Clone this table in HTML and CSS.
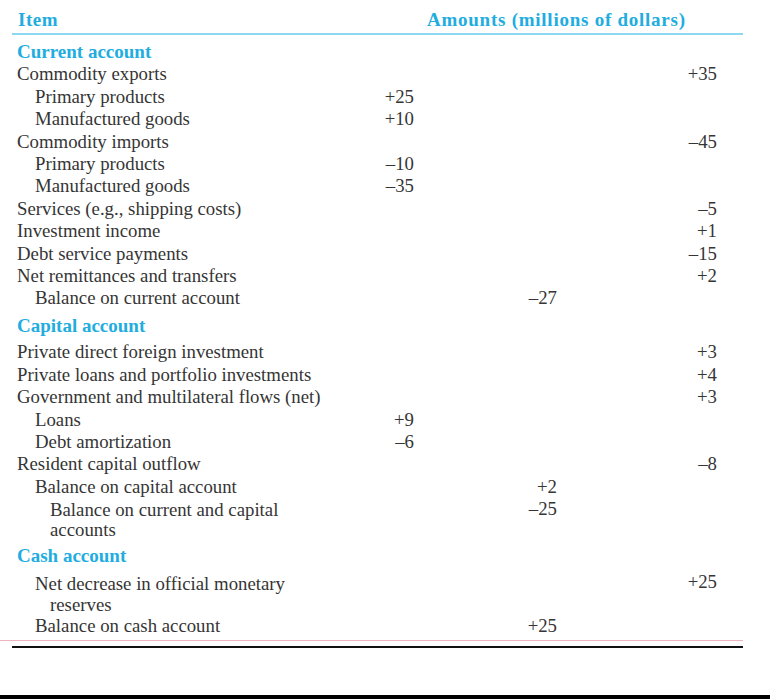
FILE: index.html
```html
<!DOCTYPE html>
<html lang="en">
<head>
<meta charset="utf-8">
<title>Balance of payments</title>
<link rel="stylesheet" href="styles.css">
</head>
<body>
<div class="sheet">
  <table class="bop">
    <colgroup>
      <col class="c-item"><col class="c-a"><col class="c-b"><col class="c-c"><col class="c-pad">
    </colgroup>
    <thead>
      <tr>
        <th class="h-item">Item</th>
        <th class="h-amt" colspan="4">Amounts (millions of dollars)</th>
      </tr>
    </thead>
    <tbody>
      <tr class="sec first"><td colspan="5">Current account</td></tr>
      <tr><td class="l0">Commodity exports</td><td></td><td></td><td class="n">+35</td><td></td></tr>
      <tr><td class="l1">Primary products</td><td class="n">+25</td><td></td><td></td><td></td></tr>
      <tr><td class="l1">Manufactured goods</td><td class="n">+10</td><td></td><td></td><td></td></tr>
      <tr><td class="l0">Commodity imports</td><td></td><td></td><td class="n">&ndash;45</td><td></td></tr>
      <tr><td class="l1">Primary products</td><td class="n">&ndash;10</td><td></td><td></td><td></td></tr>
      <tr><td class="l1">Manufactured goods</td><td class="n">&ndash;35</td><td></td><td></td><td></td></tr>
      <tr><td class="l0">Services (e.g., shipping costs)</td><td></td><td></td><td class="n">&ndash;5</td><td></td></tr>
      <tr><td class="l0">Investment income</td><td></td><td></td><td class="n">+1</td><td></td></tr>
      <tr><td class="l0">Debt service payments</td><td></td><td></td><td class="n">&ndash;15</td><td></td></tr>
      <tr><td class="l0">Net remittances and transfers</td><td></td><td></td><td class="n">+2</td><td></td></tr>
      <tr><td class="l1">Balance on current account</td><td></td><td class="n">&ndash;27</td><td></td><td></td></tr>
      <tr class="sec"><td colspan="5">Capital account</td></tr>
      <tr><td class="l0">Private direct foreign investment</td><td></td><td></td><td class="n">+3</td><td></td></tr>
      <tr><td class="l0">Private loans and portfolio investments</td><td></td><td></td><td class="n">+4</td><td></td></tr>
      <tr><td class="l0">Government and multilateral flows (net)</td><td></td><td></td><td class="n">+3</td><td></td></tr>
      <tr><td class="l1">Loans</td><td class="n">+9</td><td></td><td></td><td></td></tr>
      <tr><td class="l1">Debt amortization</td><td class="n">&ndash;6</td><td></td><td></td><td></td></tr>
      <tr><td class="l0">Resident capital outflow</td><td></td><td></td><td class="n">&ndash;8</td><td></td></tr>
      <tr><td class="l1">Balance on capital account</td><td></td><td class="n">+2</td><td></td><td></td></tr>
      <tr class="multi"><td class="l2"><span class="wrap">Balance on current and capital accounts</span></td><td></td><td class="n">&ndash;25</td><td></td><td></td></tr>
      <tr class="sec cash"><td colspan="5">Cash account</td></tr>
      <tr class="multi"><td class="l1"><span class="wrap hang">Net decrease in official monetary reserves</span></td><td></td><td></td><td class="n">+25</td><td></td></tr>
      <tr class="last"><td class="l1">Balance on cash account</td><td></td><td class="n">+25</td><td></td><td></td></tr>
    </tbody>
  </table>
  <div class="rule-pink"></div>
  <div class="rule-black"></div>
</div>
<div class="bottom-bar"></div>
</body>
</html>
```

FILE: styles.css
```css
html, body {
  margin: 0;
  padding: 0;
  background: #ffffff;
}

body {
  font-family: "Liberation Serif", "DejaVu Serif", serif;
  font-size: 18.8px;
  color: #353535;
  width: 770px;
  height: 699px;
  position: relative;
  overflow: hidden;
}

.sheet {
  margin-left: 12px;
  width: 731px;
}

.bop {
  width: 731px;
  table-layout: fixed;
  border-collapse: collapse;
  border-spacing: 0;
}

.c-item { width: 358px; }
.c-a { width: 44px; }
.c-b { width: 143px; }
.c-c { width: 160px; }
.c-pad { width: 26px; }

.bop th {
  color: #22ade0;
  font-weight: bold;
  font-size: 19px;
  text-align: left;
  line-height: 24px;
  padding: 8px 0 1px 0;
  border-bottom: 2px solid #8dd7f0;
}

.h-item {
  padding-left: 6px !important;
  letter-spacing: 0.5px;
}

.h-amt {
  padding-left: 57px !important;
  letter-spacing: 0.75px;
}

.bop td {
  padding: 0;
  line-height: 22.4px;
  white-space: nowrap;
  vertical-align: top;
}

.l0 { padding-left: 5px !important; }
.l1 { padding-left: 23px !important; }
.l2 { padding-left: 38px !important; }

.n {
  text-align: right;
}

.sec td {
  color: #22ade0;
  font-weight: bold;
  font-size: 19px;
  padding: 5px 0 4px 5px;
}

.sec.first td {
  padding: 6px 0 0 5px;
}

.sec.cash td {
  padding: 4px 0 4px 5px;
}

.multi td.l1,
.multi td.l2 {
  white-space: normal;
}

.wrap {
  display: block;
  max-width: 270px;
  padding-top: 1.5px;
  line-height: 20.5px;
}

.wrap.hang {
  padding-left: 15px;
  text-indent: -15px;
  line-height: 21px;
}

.last td {
  padding-bottom: 3px;
}

.rule-pink {
  margin-left: -12px;
  width: 743px;
  height: 1px;
  background: #efb3bd;
}

.rule-black {
  margin-top: 5px;
  width: 731px;
  height: 2px;
  background: #111111;
}

.bottom-bar {
  position: absolute;
  left: 0;
  top: 695px;
  width: 770px;
  height: 4px;
  background: #000000;
}
```
